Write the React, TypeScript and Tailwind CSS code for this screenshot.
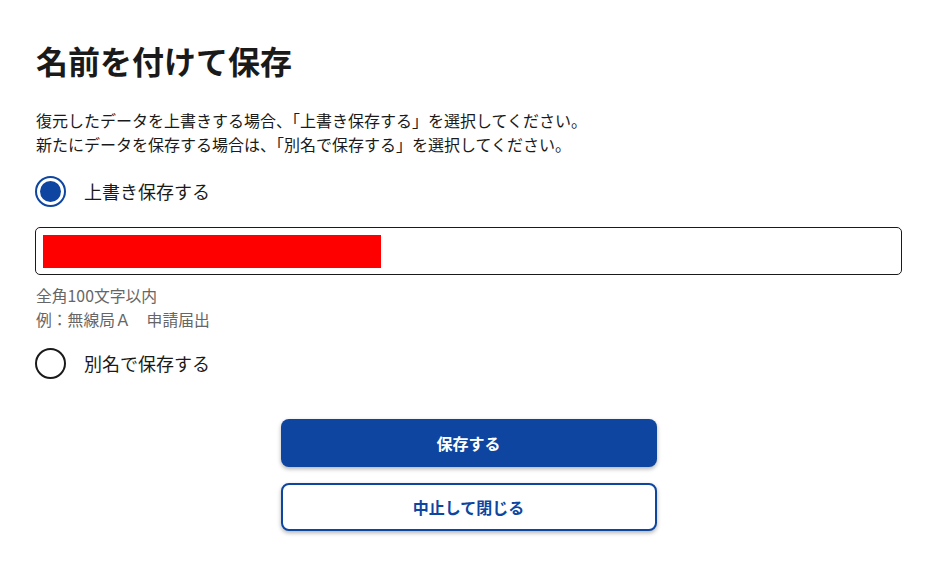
import React, { useState } from "react";

function Radio({ checked, label, onClick }: { checked: boolean; label: string; onClick: () => void }) {
  return (
    <button type="button" onClick={onClick} className="flex items-center gap-[18px] h-8 cursor-pointer">
      <span
        className={
          "flex items-center justify-center w-[31px] h-[31px] rounded-full border-2 " +
          (checked ? "border-[#0d45a0]" : "border-[#1a1a1a]")
        }
      >
        {checked && <span className="w-[21px] h-[21px] rounded-full bg-[#0d45a0]" />}
      </span>
      <span className="text-[18px] leading-8 text-[#1a1a1a]">{label}</span>
    </button>
  );
}

export default function App() {
  const [mode, setMode] = useState<"over" | "new">("over");
  return (
    <div
      className="w-[934px] h-[565px] bg-white pl-[35px] pr-8 pt-9"
      style={{ fontFamily: '"Noto Sans CJK JP", "Noto Sans", sans-serif' }}
    >
      <h1 className="text-[32px] leading-[48px] font-bold text-[#1a1a1a] pl-px">名前を付けて保存</h1>
      <div className="mt-6 text-[16px] leading-6 text-[#1a1a1a] pl-px">
        <p>復元したデータを上書きする場合、「上書き保存する」を選択してください。</p>
        <p>新たにデータを保存する場合は、「別名で保存する」を選択してください。</p>
      </div>
      <div className="mt-[19px]">
        <Radio checked={mode === "over"} label="上書き保存する" onClick={() => setMode("over")} />
      </div>
      <div className="mt-5 h-12 border border-[#1a1a1a] rounded-[5px] flex items-center px-[7px]">
        <div className="w-[338px] h-[33px] bg-[#ff0000]" />
      </div>
      <div className="mt-[9px] text-[15.8px] leading-6 text-[#666666] pl-px">
        <p>全角100文字以内</p>
        <p>例：無線局Ａ　申請届出</p>
      </div>
      <div className="mt-[15px]">
        <Radio checked={mode === "new"} label="別名で保存する" onClick={() => setMode("new")} />
      </div>
      <div className="mt-10 flex flex-col items-center gap-4">
        <button
          type="button"
          className="w-[376px] h-12 rounded-lg bg-[#0d45a0] text-white text-[16px] font-bold shadow-[0_2px_4px_rgba(0,0,0,0.3)]"
        >
          保存する
        </button>
        <button
          type="button"
          className="w-[376px] h-12 rounded-lg bg-white border-2 border-[#0d45a0] text-[#0d45a0] text-[16px] font-bold shadow-[0_2px_4px_rgba(0,0,0,0.3)]"
        >
          中止して閉じる
        </button>
      </div>
    </div>
  );
}
